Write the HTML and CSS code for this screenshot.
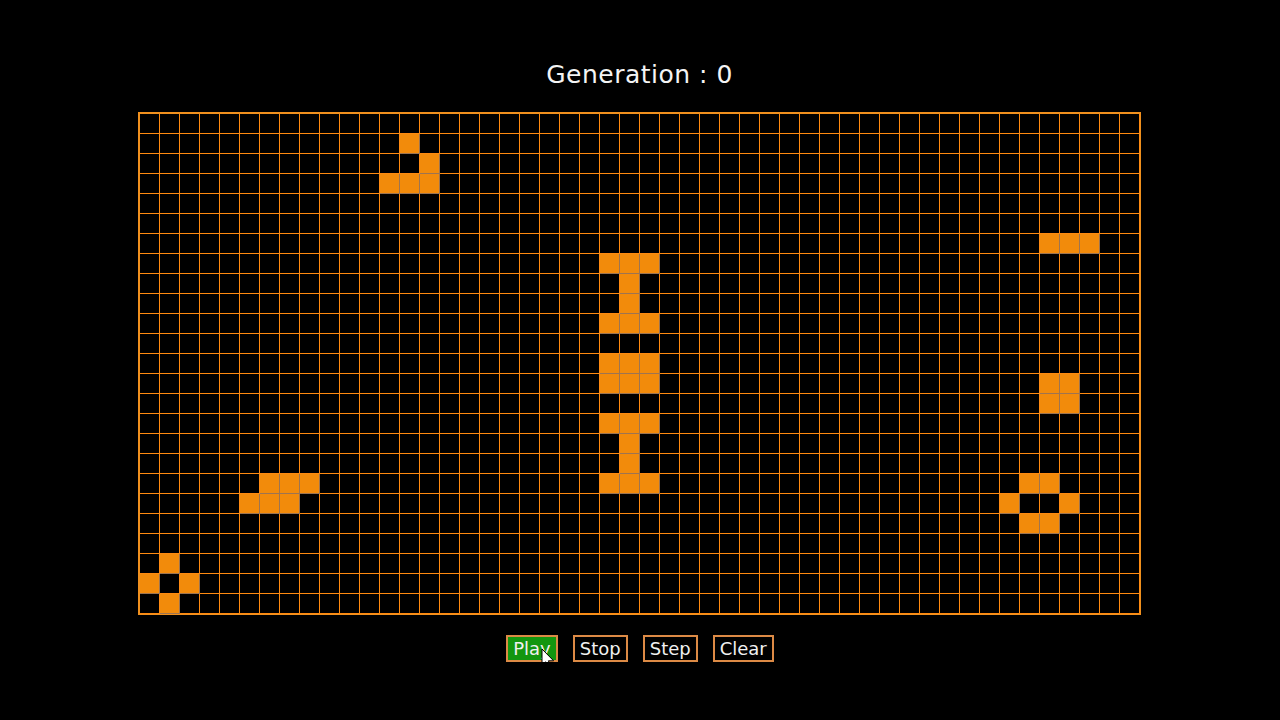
FILE: index.html
```html
<!DOCTYPE html>
<html lang="en">
<head>
<meta charset="utf-8">
<title>Game of Life</title>
<link rel="stylesheet" href="styles.css">
</head>
<body>
<main class="app">
  <h1 class="title">Generation : 0</h1>
  <div class="grid" id="grid"></div>
  <div class="controls">
    <button class="btn btn-play">Play</button>
    <button class="btn">Stop</button>
    <button class="btn">Step</button>
    <button class="btn">Clear</button>
    <svg class="cursor" width="14" height="22" viewBox="0 0 14 22"><path d="M1 1 L1 17.5 L4.8 13.8 L7.5 20 L10 19 L7.4 12.8 L12.6 12.8 Z" fill="#fff" stroke="#000" stroke-width="1"/></svg>
  </div>
</main>
<script src="script.js"></script>
</body>
</html>
```
FILE: styles.css
```css
html, body {
  margin: 0;
  padding: 0;
  background: #000;
}
body {
  font-family: "DejaVu Sans", "Liberation Sans", sans-serif;
  color: #f2f2f2;
}
.app {
  display: flex;
  flex-direction: column;
  align-items: center;
  padding-top: 60px;
  padding-right: 1px;
}
.title {
  margin: 0 0 22px;
  font-size: 25px;
  line-height: 30px;
  font-weight: normal;
  letter-spacing: 0.5px;
  color: #f4f4f4;
}
.grid {
  display: grid;
  grid-template-columns: repeat(50, 20px);
  grid-auto-rows: 20px;
  border-style: solid;
  border-color: #f0901e;
  border-width: 2px 1px 1px 2px;
}
.cell {
  box-sizing: border-box;
  border-right: 1px solid #ff8a10;
  border-bottom: 1px solid #ff8a10;
}
.cell.alive {
  background: #f28b0b;
  border-right-color: #9c7452;
  border-bottom-color: #9c7452;
}
.controls {
  position: relative;
  display: flex;
  gap: 15px;
  margin-top: 20px;
  margin-left: 1px;
}
.btn {
  font-family: "DejaVu Sans", "Liberation Sans", sans-serif;
  font-size: 18px;
  line-height: 23px;
  padding: 0 5px;
  border: 2px solid #dc8a45;
  background: #000;
  color: #f0f0f0;
  margin: 0;
}
.btn-play {
  background: #13960f;
}
.cursor {
  position: absolute;
  left: 35px;
  top: 13px;
}
```
FILE: script.js
```js
var alive = {
  1: [13], 2: [14], 3: [12, 13, 14],
  6: [45, 46, 47],
  7: [23, 24, 25], 8: [24], 9: [24], 10: [23, 24, 25],
  12: [23, 24, 25], 13: [23, 24, 25, 45, 46], 14: [45, 46],
  15: [23, 24, 25], 16: [24], 17: [24],
  18: [6, 7, 8, 23, 24, 25, 44, 45],
  19: [5, 6, 7, 43, 46],
  20: [44, 45],
  22: [1], 23: [0, 2], 24: [1]
};
var grid = document.getElementById('grid');
for (var r = 0; r < 25; r++) {
  for (var c = 0; c < 50; c++) {
    var d = document.createElement('div');
    d.className = 'cell';
    if (alive[r] && alive[r].indexOf(c) !== -1) d.className += ' alive';
    grid.appendChild(d);
  }
}
```
